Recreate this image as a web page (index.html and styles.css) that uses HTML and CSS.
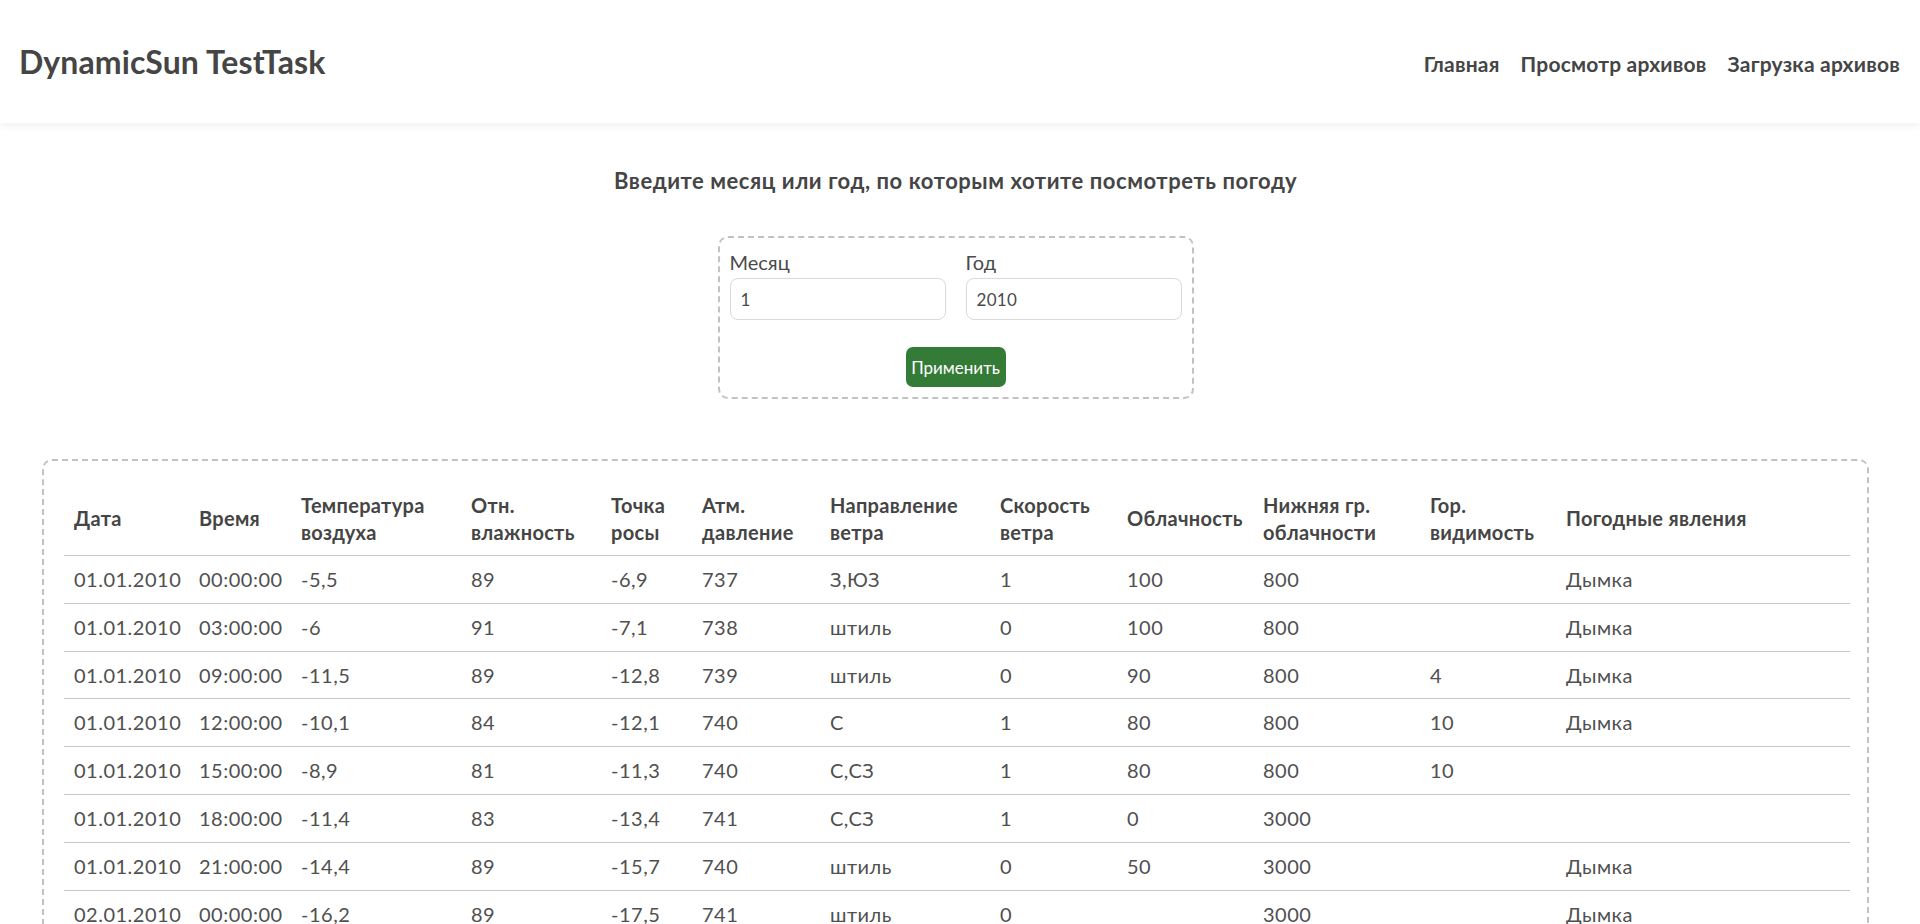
FILE: index.html
```html
<!DOCTYPE html>
<html lang="ru">
<head>
<meta charset="utf-8">
<title>DynamicSun TestTask</title>
<link rel="stylesheet" href="styles.css">
</head>
<body>
<header class="topbar">
  <a class="brand" href="#">DynamicSun TestTask</a>
  <nav class="nav">
    <a href="#">Главная</a>
    <a href="#">Просмотр архивов</a>
    <a href="#">Загрузка архивов</a>
  </nav>
</header>
<main class="main">
  <h2 class="lead">Введите месяц или год, по которым хотите посмотреть погоду</h2>
  <form class="filter">
    <div class="fields">
      <label class="field">
        <span class="label">Месяц</span>
        <input class="input" type="text" value="1">
      </label>
      <label class="field">
        <span class="label">Год</span>
        <input class="input" type="text" value="2010">
      </label>
    </div>
    <div class="actions">
      <button class="btn" type="button">Применить</button>
    </div>
  </form>
  <section class="table-box">
    <table class="weather">
      <colgroup>
        <col class="w1"><col class="w2"><col class="w3"><col class="w4"><col class="w5"><col class="w6">
        <col class="w7"><col class="w8"><col class="w9"><col class="w10"><col class="w11"><col class="w12">
      </colgroup>
      <thead>
        <tr>
          <th>Дата</th><th>Время</th><th>Температура<br>воздуха</th><th>Отн.<br>влажность</th><th>Точка<br>росы</th><th>Атм.<br>давление</th><th>Направление<br>ветра</th><th>Скорость<br>ветра</th><th>Облачность</th><th>Нижняя гр.<br>облачности</th><th>Гор.<br>видимость</th><th>Погодные явления</th>
        </tr>
      </thead>
      <tbody>
        <tr><td>01.01.2010</td><td>00:00:00</td><td>-5,5</td><td>89</td><td>-6,9</td><td>737</td><td>З,ЮЗ</td><td>1</td><td>100</td><td>800</td><td></td><td>Дымка</td></tr>
        <tr><td>01.01.2010</td><td>03:00:00</td><td>-6</td><td>91</td><td>-7,1</td><td>738</td><td>штиль</td><td>0</td><td>100</td><td>800</td><td></td><td>Дымка</td></tr>
        <tr><td>01.01.2010</td><td>09:00:00</td><td>-11,5</td><td>89</td><td>-12,8</td><td>739</td><td>штиль</td><td>0</td><td>90</td><td>800</td><td>4</td><td>Дымка</td></tr>
        <tr><td>01.01.2010</td><td>12:00:00</td><td>-10,1</td><td>84</td><td>-12,1</td><td>740</td><td>С</td><td>1</td><td>80</td><td>800</td><td>10</td><td>Дымка</td></tr>
        <tr><td>01.01.2010</td><td>15:00:00</td><td>-8,9</td><td>81</td><td>-11,3</td><td>740</td><td>С,СЗ</td><td>1</td><td>80</td><td>800</td><td>10</td><td></td></tr>
        <tr><td>01.01.2010</td><td>18:00:00</td><td>-11,4</td><td>83</td><td>-13,4</td><td>741</td><td>С,СЗ</td><td>1</td><td>0</td><td>3000</td><td></td><td></td></tr>
        <tr><td>01.01.2010</td><td>21:00:00</td><td>-14,4</td><td>89</td><td>-15,7</td><td>740</td><td>штиль</td><td>0</td><td>50</td><td>3000</td><td></td><td>Дымка</td></tr>
        <tr><td>02.01.2010</td><td>00:00:00</td><td>-16,2</td><td>89</td><td>-17,5</td><td>741</td><td>штиль</td><td>0</td><td></td><td>3000</td><td></td><td>Дымка</td></tr>
        <tr><td>02.01.2010</td><td>03:00:00</td><td>-17,1</td><td>88</td><td>-18,5</td><td>742</td><td>штиль</td><td>0</td><td></td><td>3000</td><td></td><td>Дымка</td></tr>
      </tbody>
    </table>
  </section>
</main>
</body>
</html>
```

FILE: styles.css
```css
* { box-sizing: border-box; }

html, body {
  margin: 0;
  padding: 0;
  background: #fff;
  font-family: Lato, "Noto Sans", sans-serif;
  color: #4a4a4a;
}

.topbar {
  height: 123px;
  display: flex;
  align-items: center;
  justify-content: space-between;
  padding: 0 20px 0 19px;
  background: #fff;
  box-shadow: 0 2px 8px rgba(0, 0, 0, 0.07);
}

.brand {
  font-size: 32px;
  font-weight: 700;
  letter-spacing: 0.1px;
  color: #454545;
  text-decoration: none;
}

.nav {
  display: flex;
  gap: 21px;
  padding-top: 4px;
}

.nav a {
  font-size: 21px;
  font-weight: 700;
  letter-spacing: 0.2px;
  color: #454545;
  text-decoration: none;
}

.main {
  padding: 0 51px 40px 42px;
}

.lead {
  margin: 0;
  padding-top: 43px;
  text-align: center;
  font-size: 22px;
  line-height: 30px;
  font-weight: 700;
  letter-spacing: 0.55px;
  color: #454545;
}

.filter {
  width: 476px;
  margin: 40px auto 0;
  padding: 10px 10px 10px;
  border: 2px dashed #c2c2c2;
  border-radius: 10px;
}

.fields {
  display: grid;
  grid-template-columns: minmax(0, 1fr) minmax(0, 1fr);
  gap: 20px;
}

.field {
  display: flex;
  flex-direction: column;
  min-width: 0;
}

.label {
  font-size: 20px;
  line-height: 28px;
  padding-bottom: 2px;
  color: #4a4a4a;
}

.input {
  width: 100%;
  height: 42px;
  padding: 0 10px;
  border: 1px solid #d9d9d9;
  border-radius: 8px;
  font-family: Lato, "Noto Sans", sans-serif;
  font-size: 17px;
  letter-spacing: 0.3px;
  color: #4a4a4a;
  background: #fff;
}

.actions {
  display: flex;
  justify-content: center;
  margin-top: 27px;
}

.btn {
  width: 100px;
  height: 40px;
  border: none;
  border-radius: 7px;
  background: #357b38;
  color: #fff;
  font-family: Lato, "Noto Sans", sans-serif;
  font-size: 17px;
  padding: 0;
}

.table-box {
  margin-top: 60px;
  padding: 21px 20px 20px;
  border: 2px dashed #c2c2c2;
  border-radius: 10px;
}

.weather {
  width: 100%;
  table-layout: fixed;
  border-collapse: collapse;
}

.w1 { width: 125px; }
.w2 { width: 102px; }
.w3 { width: 170px; }
.w4 { width: 140px; }
.w5 { width: 91px; }
.w6 { width: 128px; }
.w7 { width: 170px; }
.w8 { width: 127px; }
.w9 { width: 136px; }
.w10 { width: 167px; }
.w11 { width: 136px; }
.w12 { width: 294px; }

.weather th {
  text-align: left;
  vertical-align: middle;
  padding: 10px 10px 10px;
  font-size: 20px;
  line-height: 26.5px;
  font-weight: 700;
  letter-spacing: 0.3px;
  color: #454545;
  border-bottom: 1px solid #c8c8c8;
  white-space: nowrap;
}

.weather td {
  padding: 10px 10px 10px;
  font-size: 20px;
  line-height: 26.8px;
  letter-spacing: 0.5px;
  color: #505050;
  border-bottom: 1px solid #c8c8c8;
  white-space: nowrap;
}
```
